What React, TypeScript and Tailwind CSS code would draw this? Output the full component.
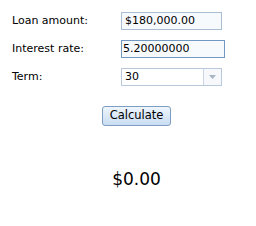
export default function App() {
  return (
    <div className="w-[256px] h-[226px] bg-white text-black font-['DejaVu_Sans',Verdana,sans-serif] text-[11px]">
      <div className="pt-[12px] pl-[12px] grid grid-cols-[109px_auto] gap-y-[10px] items-center">
        <span>Loan amount:</span>
        <div className="w-[101px] h-[18px] border border-[#a9bdd5] bg-[#f7fafd] pl-[3px] flex items-center">$180,000.00</div>
        <span>Interest rate:</span>
        <div className="w-[104px] h-[18px] border border-[#7399c3] bg-[#f7fafd] pl-[1px] flex items-center">5.20000000</div>
        <span>Term:</span>
        <div className="w-[101px] h-[18px] border border-[#b9c9db] bg-white flex items-center">
          <span className="flex-1 pl-[3px]">30</span>
          <div className="w-[18px] h-full border-l border-[#c9d5e2] bg-[#f6f8fb] flex items-center justify-center">
            <svg width="7" height="4" viewBox="0 0 7 4">
              <path d="M0 0h7L3.5 4z" fill="#a6b4c4" />
            </svg>
          </div>
        </div>
      </div>
      <div className="flex justify-center pl-[17px] mt-[20px]">
        <button className="w-[69px] h-[20px] rounded-[3px] border border-[#7d9ec2] bg-gradient-to-b from-[#eef5fc] to-[#c9ddf2] text-[11.5px] leading-none">
          Calculate
        </button>
      </div>
      <div className="flex justify-center pl-[17px] mt-[43px] text-[17px] leading-[20px]">$0.00</div>
    </div>
  );
}
